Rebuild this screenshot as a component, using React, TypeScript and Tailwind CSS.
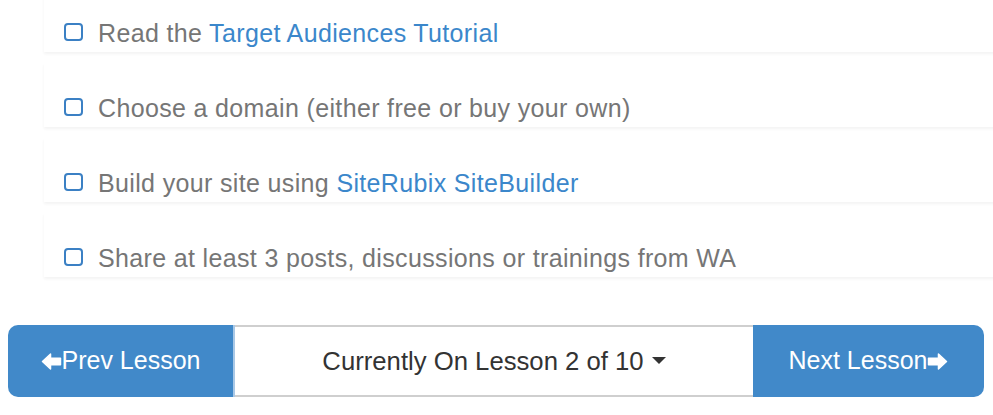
import React from "react";

const items: { text: string; link?: string }[] = [
  { text: "Read the ", link: "Target Audiences Tutorial" },
  { text: "Choose a domain (either free or buy your own)" },
  { text: "Build your site using ", link: "SiteRubix SiteBuilder" },
  { text: "Share at least 3 posts, discussions or trainings from WA" },
];

function Arrow({ dir }: { dir: "left" | "right" }) {
  return (
    <svg width="21" height="19" viewBox="0 0 22 20" className="inline-block" style={{ transform: dir === "right" ? "scaleX(-1)" : undefined }}>
      <path d="M1.5 10 L10 2 L10 6.5 L20.5 6.5 L20.5 13.5 L10 13.5 L10 18 Z" fill="white" strokeLinejoin="round" stroke="white" strokeWidth="1.5" />
    </svg>
  );
}

export default function App() {
  return (
    <div className="w-[993px] h-[415px] overflow-hidden bg-white" style={{ fontFamily: '"Liberation Sans", Arial, sans-serif' }}>
      <div className="mt-[-12px] ml-[44px] mr-[-20px] flex flex-col gap-[11px]">
        {items.map((it, i) => (
          <div key={i} className="h-[64px] bg-white shadow-[0_2px_3px_rgba(0,0,0,0.05)] flex items-end pb-[3px] pl-[20px]">
            <div className="flex items-center gap-[15px]">
              <span className="w-[19px] h-[18px] border-2 border-[#3b80c4] rounded-[4px] shrink-0 mb-[3px]" />
              <span className="text-[25px] tracking-[0.35px] text-[#767676] leading-[32px] whitespace-nowrap">
                {it.text}
                {it.link && <span className="text-[#3b87cb]">{it.link}</span>}
              </span>
            </div>
          </div>
        ))}
      </div>
      <div className="mt-[48px] ml-[8px] w-[976px] h-[72px] flex">
        <div className="w-[227px] h-full bg-[#4189c9] rounded-l-[10px] border-r-2 border-[#a9c8e6] flex items-center justify-center text-white text-[25px]">
          <Arrow dir="left" />
          <span>Prev Lesson</span>
        </div>
        <div className="flex-1 h-full bg-white border-y-2 border-[#cfcfcf] flex items-center justify-center text-[#333] text-[25.7px]">
          <span>Currently On Lesson 2 of 10</span>
          <svg width="14" height="8" viewBox="0 0 14 8" className="ml-[8px]">
            <path d="M0 0 L14 0 L7 7 Z" fill="#333" />
          </svg>
        </div>
        <div className="w-[231px] h-full bg-[#4189c9] rounded-r-[10px] flex items-center justify-center text-white text-[25px]">
          <span>Next Lesson</span>
          <Arrow dir="right" />
        </div>
      </div>
    </div>
  );
}
